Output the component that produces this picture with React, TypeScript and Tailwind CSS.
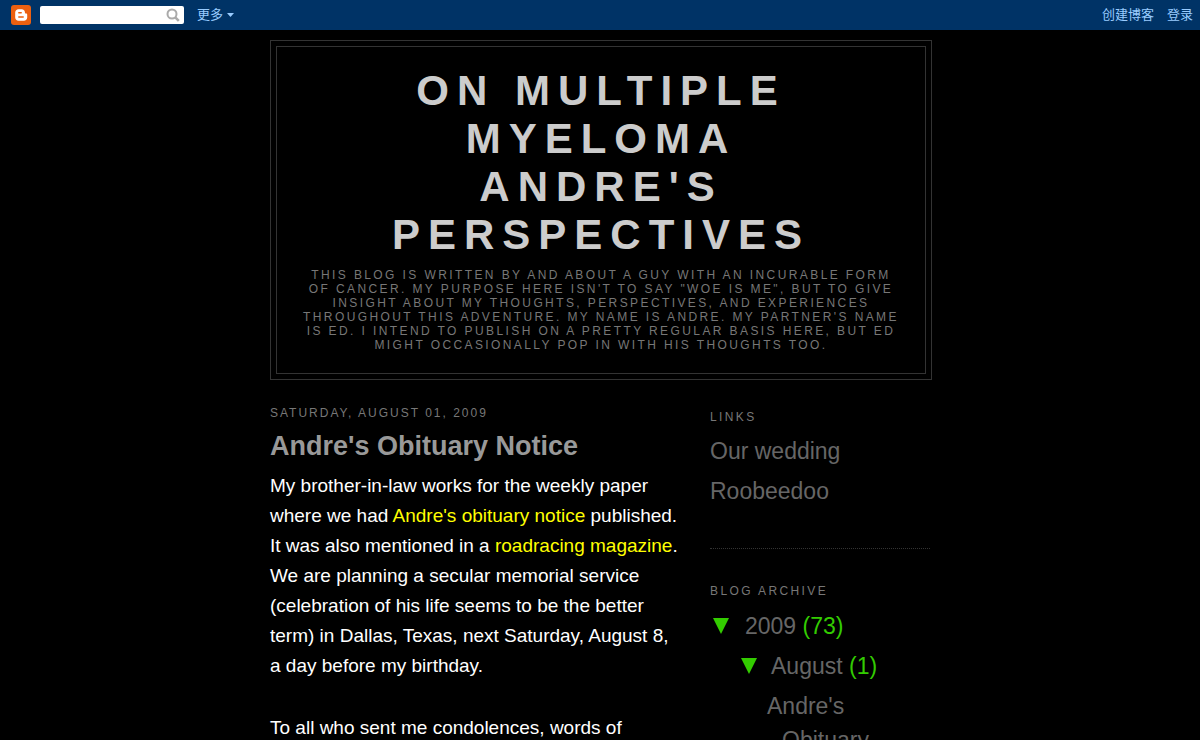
const archiveLink = "text-[#666666] hover:underline";

function Navbar() {
  return (
    <nav className="flex h-[30px] items-center bg-[#003366] pl-[11px] pr-[7px] text-[13px] text-[#99ccff]">
      <a href="#home" aria-label="Blogger">
        <svg className="block size-5" viewBox="0 0 20 20">
          <rect width="20" height="20" rx="3" fill="#ec6010" />
          <path
            d="M7.500 4.200h3.200c1.900 0 3.200 1.300 3.200 3.100 0 .9.300 1.300 1.100 1.300.8 0 1.200.4 1.200 1.200v2.600c0 1.900-1.400 3.300-3.300 3.300H7.500c-1.900 0-3.300-1.400-3.300-3.300V7.500c0-1.900 1.400-3.300 3.300-3.300z"
            fill="#fff"
          />
          <path d="M7.800 7.800h2.400M7.800 12.100h4.400" stroke="#ec6010" strokeWidth="1.500" strokeLinecap="round" />
        </svg>
      </a>
      <form className="ml-[9px] flex h-[18px] w-36 items-center rounded-[2px] bg-white pr-1" role="search">
        <input aria-label="Search" type="text" className="h-full min-w-0 flex-1 bg-transparent px-1 text-xs text-black outline-none" />
        <button type="button" aria-label="Search">
          <svg className="block size-[14px]" viewBox="0 0 14 14" fill="none" stroke="#aaaaaa">
            <circle cx="6" cy="6" r="4.500" strokeWidth="2" />
            <path d="M9.300 9.300l3.500 3.500" strokeWidth="2.600" />
          </svg>
        </button>
      </form>
      <button type="button" className="ml-[13px] flex items-center gap-1">
        更多
        <svg className="block h-1 w-[7px]" viewBox="0 0 7 4" fill="#99ccff">
          <path d="M0 0h7L3.500 4z" />
        </svg>
      </button>
      <div className="ml-auto flex gap-[13px]">
        <a href="#create">创建博客</a>
        <a href="#login">登录</a>
      </div>
    </nav>
  );
}

function Header() {
  return (
    <header className="w-[662px] border border-[#333333] p-[5px]">
      <div className="border border-[#333333] px-[25px] pt-5 pb-[21px] text-center uppercase">
        <h1 className="text-[42px] font-bold leading-[48px] tracking-[8px] text-[#cccccc]">
          On Multiple
          <br />
          Myeloma
          <br />
          Andre&#39;s
          <br />
          Perspectives
        </h1>
        <p className="mt-[9px] text-xs leading-[14px] tracking-[0.2em] text-[#777777]">
          This blog is written by and about a guy with an incurable form of cancer. My purpose here isn&#39;t to say
          &quot;Woe is me&quot;, but to give insight about my thoughts, perspectives, and experiences throughout this
          adventure. My name is Andre. My partner&#39;s name is Ed. I intend to publish on a pretty regular basis here,
          but Ed might occasionally pop in with his thoughts too.
        </p>
      </div>
    </header>
  );
}

function Post() {
  return (
    <main className="w-[410px] pt-[26px]">
      <h2 className="text-xs leading-[14px] tracking-[2px] text-[#777777] uppercase">Saturday, August 01, 2009</h2>
      <h3 className="mt-[7px] text-[27px] font-bold leading-[38px] text-[#999999]">Andre&#39;s Obituary Notice</h3>
      <div className="mt-[6px] flex flex-col gap-8 text-[19px] leading-[30px] text-white">
        <p>
          My brother-in-law works for the weekly paper where we had{" "}
          <a href="#notice" className="text-[#ffff00]">Andre&#39;s obituary notice</a> published. It was also mentioned
          in a <a href="#magazine" className="text-[#ffff00]">roadracing magazine</a>. We are planning a secular
          memorial service (celebration of his life seems to be the better term) in Dallas, Texas, next Saturday,
          August 8, a day before my birthday.
        </p>
        <p>To all who sent me condolences, words of</p>
      </div>
    </main>
  );
}

function Toggle() {
  return (
    <button type="button" aria-label="Collapse" className="shrink-0">
      <svg className="block h-4 w-4" viewBox="0 0 16 16" fill="#33cc00">
        <path d="M0 0h16L8 16z" />
      </svg>
    </button>
  );
}

function Sidebar() {
  return (
    <aside className="w-[220px] pt-[30px] text-[23px] leading-[34px] text-[#666666]">
      <section className="border-b border-dotted border-[#333333] pb-10">
        <h2 className="text-xs leading-[14px] tracking-[0.2em] text-[#777777] uppercase">Links</h2>
        <ul className="mt-[10px] flex flex-col gap-[6px]">
          <li><a href="#wedding">Our wedding</a></li>
          <li><a href="#roobeedoo">Roobeedoo</a></li>
        </ul>
      </section>
      <section className="pt-[35px]">
        <h2 className="text-xs leading-[14px] tracking-[0.2em] text-[#777777] uppercase">Blog Archive</h2>
        <ul className="mt-[11px] flex flex-col gap-[6px]">
          <li className="flex items-center gap-4 pl-[3px]">
            <Toggle />
            <span><a href="#2009" className={archiveLink}>2009</a> <span className="text-[#33cc00]">(73)</span></span>
          </li>
          <li className="flex items-center gap-[14px] pl-[31px]">
            <Toggle />
            <span><a href="#august" className={archiveLink}>August</a> <span className="text-[#33cc00]">(1)</span></span>
          </li>
          <li className="w-[180px] pl-[72px] -indent-[15px]">
            <a href="#obituary" className={archiveLink}>Andre&#39;s Obituary</a>
          </li>
        </ul>
      </section>
    </aside>
  );
}

export default function App() {
  return (
    <div className="h-screen overflow-hidden bg-black font-['Liberation_Sans','Noto_Sans_CJK_SC',sans-serif]">
      <Navbar />
      <div className="mx-auto w-[660px] pt-[10px]">
        <Header />
        <div className="flex justify-between">
          <Post />
          <Sidebar />
        </div>
      </div>
    </div>
  );
}
